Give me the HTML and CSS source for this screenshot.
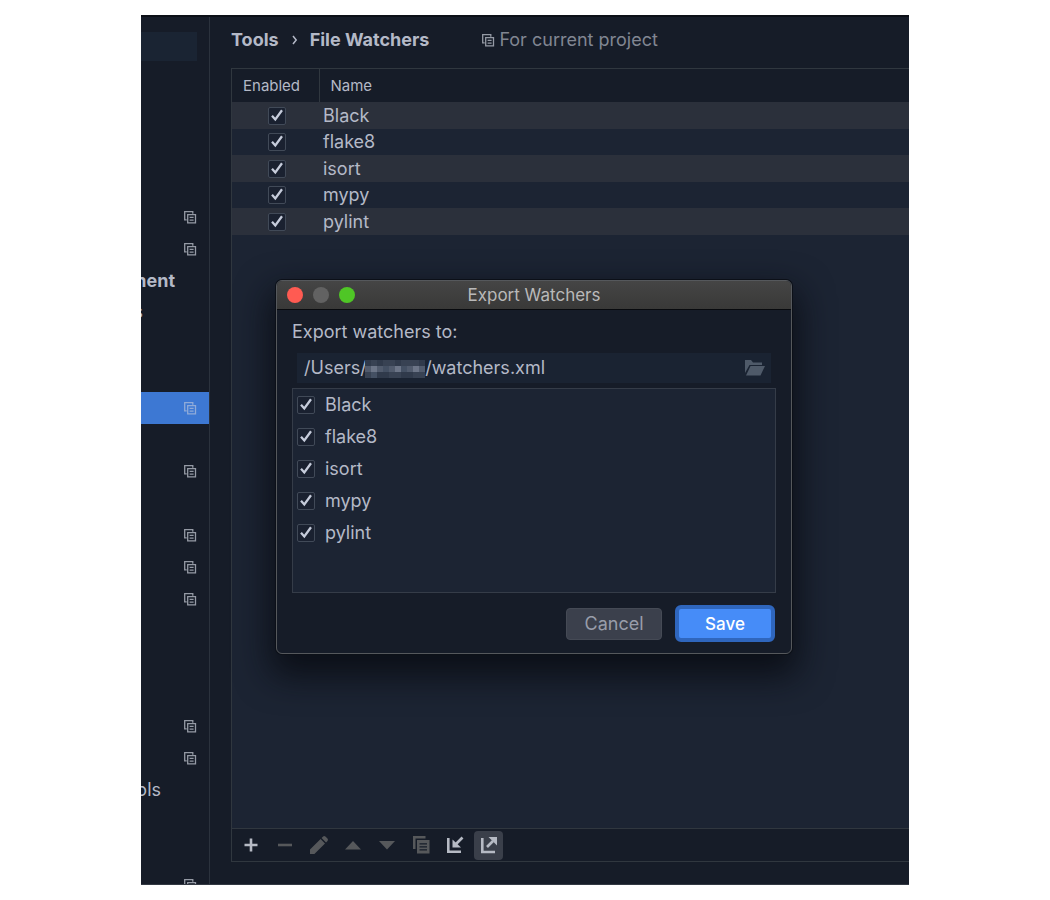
FILE: index.html
```html
<!DOCTYPE html>
<html lang="en">
<head>
<meta charset="utf-8">
<title>File Watchers</title>
<link rel="stylesheet" href="styles.css">
</head>
<body>
<svg class="defs" width="0" height="0" aria-hidden="true">
  <symbol id="copy" viewBox="0 0 14 14">
    <path d="M3.7 9.8H1.7V1.7h8.1v2M4.7 4.7h7.8v8.1H4.7zM6.6 7.4h4M6.6 10.1h4" fill="none" stroke="currentColor" stroke-width="1.3"/>
  </symbol>
</svg>
<div class="window">
  <nav class="sidebar" aria-label="Settings">
    <div class="search"></div>
    <ul class="tree">
      <li><svg class="copy"><use href="#copy"/></svg></li>
      <li><svg class="copy"><use href="#copy"/></svg></li>
      <li class="group">ment</li>
      <li class="edge">s</li>
      <li></li>
      <li></li>
      <li class="selected"><svg class="copy"><use href="#copy"/></svg></li>
      <li></li>
      <li><svg class="copy"><use href="#copy"/></svg></li>
      <li></li>
      <li><svg class="copy"><use href="#copy"/></svg></li>
      <li><svg class="copy"><use href="#copy"/></svg></li>
      <li><svg class="copy"><use href="#copy"/></svg></li>
      <li></li>
      <li></li>
      <li></li>
      <li><svg class="copy"><use href="#copy"/></svg></li>
      <li><svg class="copy"><use href="#copy"/></svg></li>
      <li class="tools">ols</li>
      <li></li>
      <li></li>
      <li><svg class="copy"><use href="#copy"/></svg></li>
    </ul>
  </nav>
  <main class="content">
    <header class="crumbs">
      <span class="crumb">Tools</span>
      <svg class="chevron" viewBox="0 0 6 10"><path d="M1 1l3.2 4L1 9" fill="none" stroke="currentColor" stroke-width="1.5"/></svg>
      <span class="crumb">File Watchers</span>
      <span class="scope"><svg class="copy"><use href="#copy"/></svg>For current project</span>
    </header>
    <section class="panel">
      <div class="rows">
        <table>
          <thead><tr><th class="enabled" scope="col">Enabled</th><th scope="col">Name</th></tr></thead>
          <tbody>
            <tr><td class="tick"><input type="checkbox" id="w1" checked></td><td><label for="w1">Black</label></td></tr>
            <tr><td class="tick"><input type="checkbox" id="w2" checked></td><td><label for="w2">flake8</label></td></tr>
            <tr><td class="tick"><input type="checkbox" id="w3" checked></td><td><label for="w3">isort</label></td></tr>
            <tr><td class="tick"><input type="checkbox" id="w4" checked></td><td><label for="w4">mypy</label></td></tr>
            <tr><td class="tick"><input type="checkbox" id="w5" checked></td><td><label for="w5">pylint</label></td></tr>
          </tbody>
        </table>
      </div>
      <div class="toolbar">
        <button class="tool" aria-label="Add"><svg viewBox="0 0 20 20"><path d="M10 3.5v13M3.5 10h13" stroke="currentColor" stroke-width="2.6"/></svg></button>
        <button class="tool off" aria-label="Remove"><svg viewBox="0 0 20 20"><path d="M3 10h14" stroke="currentColor" stroke-width="2.6"/></svg></button>
        <button class="tool off" aria-label="Edit"><svg viewBox="0 0 20 20"><path d="M1 19v-4.400L11.600 4l4.400 4.400L5.400 19zM12.600 3l1.500-1.500q1.100-1 2.300 0l2.100 2.100q1 1.100 0 2.300L17 7.400z" fill="currentColor"/></svg></button>
        <button class="tool off" aria-label="Move up"><svg viewBox="0 0 20 20"><path d="M2 14.500L10 6l8 8.500z" fill="currentColor"/></svg></button>
        <button class="tool off" aria-label="Move down"><svg viewBox="0 0 20 20"><path d="M2 6l8 8.500L18 6z" fill="currentColor"/></svg></button>
        <button class="tool off" aria-label="Copy"><svg viewBox="0 0 20 20"><path d="M2 1h12.500v2.500H4.500V14H2zM6 5h12.500v13.500H6zM8.500 8.200v1.300H16V8.200zM8.500 11.200v1.300H16v-1.300zM8.500 14.200v1.300H16v-1.300z" fill="currentColor" fill-rule="evenodd"/></svg></button>
        <button class="tool" aria-label="Import"><svg viewBox="0 0 20 20"><path d="M3.300 3v13.700H16" fill="none" stroke="currentColor" stroke-width="2.600"/><path d="M17.500 2.500L11 9" stroke="currentColor" stroke-width="2.600"/><path d="M7.500 4.500v8h8.500z" fill="currentColor"/></svg></button>
        <button class="tool active" aria-label="Export"><svg viewBox="0 0 20 20"><path d="M3.300 3v14H16" fill="none" stroke="currentColor" stroke-width="2.600"/><path d="M8 12l6-6" stroke="currentColor" stroke-width="2.600"/><path d="M9.500 2H18v8.500z" fill="currentColor"/></svg></button>
      </div>
    </section>
  </main>
  <form class="dialog" role="dialog" aria-labelledby="dialog-title">
    <header class="titlebar">
      <div class="lights"><i class="light close"></i><i class="light minimise"></i><i class="light zoom"></i></div>
      <h2 id="dialog-title">Export Watchers</h2>
    </header>
    <div class="body">
      <label class="caption" for="path">Export watchers to:</label>
      <div class="path">
        <input type="text" id="path" value="/Users/&emsp;&emsp;&emsp;&#8197;/watchers.xml">
        <svg class="mosaic" viewBox="0 0 60 18" preserveAspectRatio="none" shape-rendering="crispEdges">
          <path fill="#303a4b" d="M0 0h60v18H0z"/>
          <path fill="#384253" d="M6 0h6v6H6zM18 0h12v6H18zM36 0h18v6H36zM0 12h6v6H0zM24 12h12v6H24zM48 12h12v6H48z"/>
          <path fill="#515b6d" d="M0 6h6v6H0zM12 6h6v6h-6zM24 6h12v6H24zM42 6h18v6H42z"/>
          <path fill="#6c7587" d="M6 6h6v6H6zM30 6h6v6h-6zM48 6h6v6h-6z"/>
          <path fill="#445063" d="M18 6h6v6h-6zM36 6h6v6h-6zM6 12h6v6H6z"/>
        </svg>
        <button type="button" class="browse" aria-label="Browse"><svg viewBox="0 0 20 16"><path d="M0 13V0h6l2 2.500h9V5H4.500zM1 15.500L5.500 6H20l-4.500 9.500z" fill="currentColor"/></svg></button>
      </div>
      <div class="list">
        <label><input type="checkbox" checked>Black</label>
        <label><input type="checkbox" checked>flake8</label>
        <label><input type="checkbox" checked>isort</label>
        <label><input type="checkbox" checked>mypy</label>
        <label><input type="checkbox" checked>pylint</label>
      </div>
      <footer class="actions">
        <button type="button" class="btn">Cancel</button>
        <button type="button" class="btn primary">Save</button>
      </footer>
    </div>
  </form>
</div>
</body>
</html>
```
FILE: styles.css
```css
* { box-sizing: border-box; }
body {
  margin: 0;
  min-height: 100vh;
  padding: 15px 141px;
  background: #fff;
  color: #b4b9c7;
  font: 18px/20px Inter, "Liberation Sans", sans-serif;
  display: flex;
}
button, input { font: inherit; color: inherit; margin: 0; }
.defs { position: absolute; }
.window {
  position: relative;
  flex: 1;
  min-width: 0;
  display: flex;
  overflow: hidden;
  background: #161c28;
  border-top: 2px solid #0c1017;
  border-bottom: 1px solid #333943;
}
.copy { width: 14px; height: 14px; flex: none; color: #959aa5; }

.sidebar {
  flex: none;
  width: 69px;
  height: 867px;
  overflow: hidden;
  border-right: 1px solid #2b323d;
}
.search { height: 29px; margin: 15px 12px 0 0; background: #1a2433; }
.tree {
  list-style: none;
  margin: 140px 0 0;
  padding: 0;
  height: 700px;
  display: grid;
  grid-template-columns: minmax(0, 1fr);
  grid-auto-rows: 1fr;
}
.tree li {
  display: flex;
  align-items: center;
  justify-content: flex-end;
  padding-right: 12px;
}
.tree .selected { background: #3d78d3; }
.selected .copy { color: #90abd9; }
.tree .group { padding-right: 34px; font-weight: 700; }
.tree .edge { padding-right: 66px; }
.tree .tools { padding-right: 48px; }

.content {
  flex: 1;
  min-width: 0;
  display: flex;
  flex-direction: column;
  padding: 12px 0 22px 21px;
}
.crumbs { display: flex; align-items: center; height: 22px; white-space: nowrap; }
.crumb { font-weight: 700; }
.chevron { width: 6px; height: 10px; margin: 0 12px 0 13px; }
.scope { display: flex; align-items: center; gap: 4px; margin-left: 52px; color: #818692; }
.panel {
  flex: 1;
  display: flex;
  flex-direction: column;
  margin-top: 17px;
  border: 1px solid #30373f;
  border-right: 0;
}
.rows { flex: 1; background: #1c2433; }
table { width: 100%; border-collapse: collapse; }
thead { background: #161c28; }
th {
  height: 33px;
  padding: 0 11px;
  font-size: 15px;
  font-weight: 400;
  text-align: left;
}
.enabled { width: 87px; border-right: 1px solid #30373f; }
td { height: 27px; padding: 0 4px; }
tr:nth-child(even) td { height: 26px; }
.tick { padding-left: 6px; }
.tick input { display: block; margin: 0 auto; }
tbody tr:nth-child(odd) { background: #2b303b; }
input[type="checkbox"] {
  appearance: none;
  width: 18px;
  height: 18px;
  border: 1px solid #414a58;
  border-radius: 2px;
  background: #1a2130;
}
input[type="checkbox"]:checked {
  background: #1a2130 url("data:image/svg+xml,%3Csvg xmlns='http://www.w3.org/2000/svg' viewBox='0 0 16 16'%3E%3Cpath d='M3 7.800l3.300 3.700L13 2.300' fill='none' stroke='%23c6ccdb' stroke-width='2.300'/%3E%3C/svg%3E") center / 16px no-repeat;
}

.toolbar {
  display: flex;
  align-items: center;
  gap: 5px;
  height: 33px;
  padding-left: 4px;
  border-top: 1px solid #30373f;
}
.tool {
  display: grid;
  place-items: center;
  width: 29px;
  height: 29px;
  padding: 0;
  border: 0;
  border-radius: 4px;
  background: none;
  color: #b6bac4;
}
.tool svg { width: 20px; height: 20px; }
.off { color: #56585b; }
.active { background: #3a3f4a; }

.dialog {
  position: absolute;
  top: 263px;
  left: 135px;
  right: 117px;
  background: #161c28;
  border: 1px solid #55585c;
  border-radius: 6px;
  box-shadow: 0 0 0 1px #0c1018, 0 16px 34px 6px rgba(8, 10, 16, 0.8);
}
.titlebar {
  display: flex;
  align-items: center;
  justify-content: center;
  height: 29px;
  border-bottom: 1px solid #080a0e;
  border-radius: 5px 5px 0 0;
  background: linear-gradient(#454545, #393938);
}
.lights { position: absolute; left: 10px; display: flex; gap: 10px; }
.light { width: 16px; height: 16px; border-radius: 50%; }
.close { background: #ff5b52; }
.minimise { background: #626262; }
.zoom { background: #4fc626; }
h2 { margin: 0; font-size: 17px; font-weight: 400; color: #b9b9b9; }
.body { padding: 12px 15px 11px; }
.caption { display: block; }
.path {
  position: relative;
  display: flex;
  align-items: center;
  height: 30px;
  margin: 11px 5px 5px;
  background: #1a2332;
}
.path input { flex: 1; min-width: 0; padding: 0 0 0 7px; border: 0; outline: 0; background: none; }
.mosaic { position: absolute; left: 68px; top: 7px; width: 60px; height: 18px; }
.browse { width: 20px; height: 16px; padding: 0; margin-right: 6px; border: 0; background: none; color: #4f5a69; }
.browse svg { display: block; width: 20px; height: 16px; }
.list {
  display: flex;
  flex-direction: column;
  height: 205px;
  padding: 0 4px;
  border: 1px solid #353c48;
  background: #1c2433;
}
.list label { display: flex; align-items: center; gap: 10px; height: 32px; }
.actions { display: flex; justify-content: flex-end; align-items: center; gap: 13px; margin-top: 12px; padding-right: 1px; }
.btn {
  width: 96px;
  height: 32px;
  padding: 0;
  border: 1px solid #454a55;
  border-radius: 4px;
  background: #3b404c;
  color: #989daa;
}
.primary {
  width: 100px;
  height: 37px;
  border: 4px solid #2f66bd;
  border-radius: 6px;
  background: #468cf8;
  color: #fff;
  font-size: 17px;
  font-weight: 500;
}
```
